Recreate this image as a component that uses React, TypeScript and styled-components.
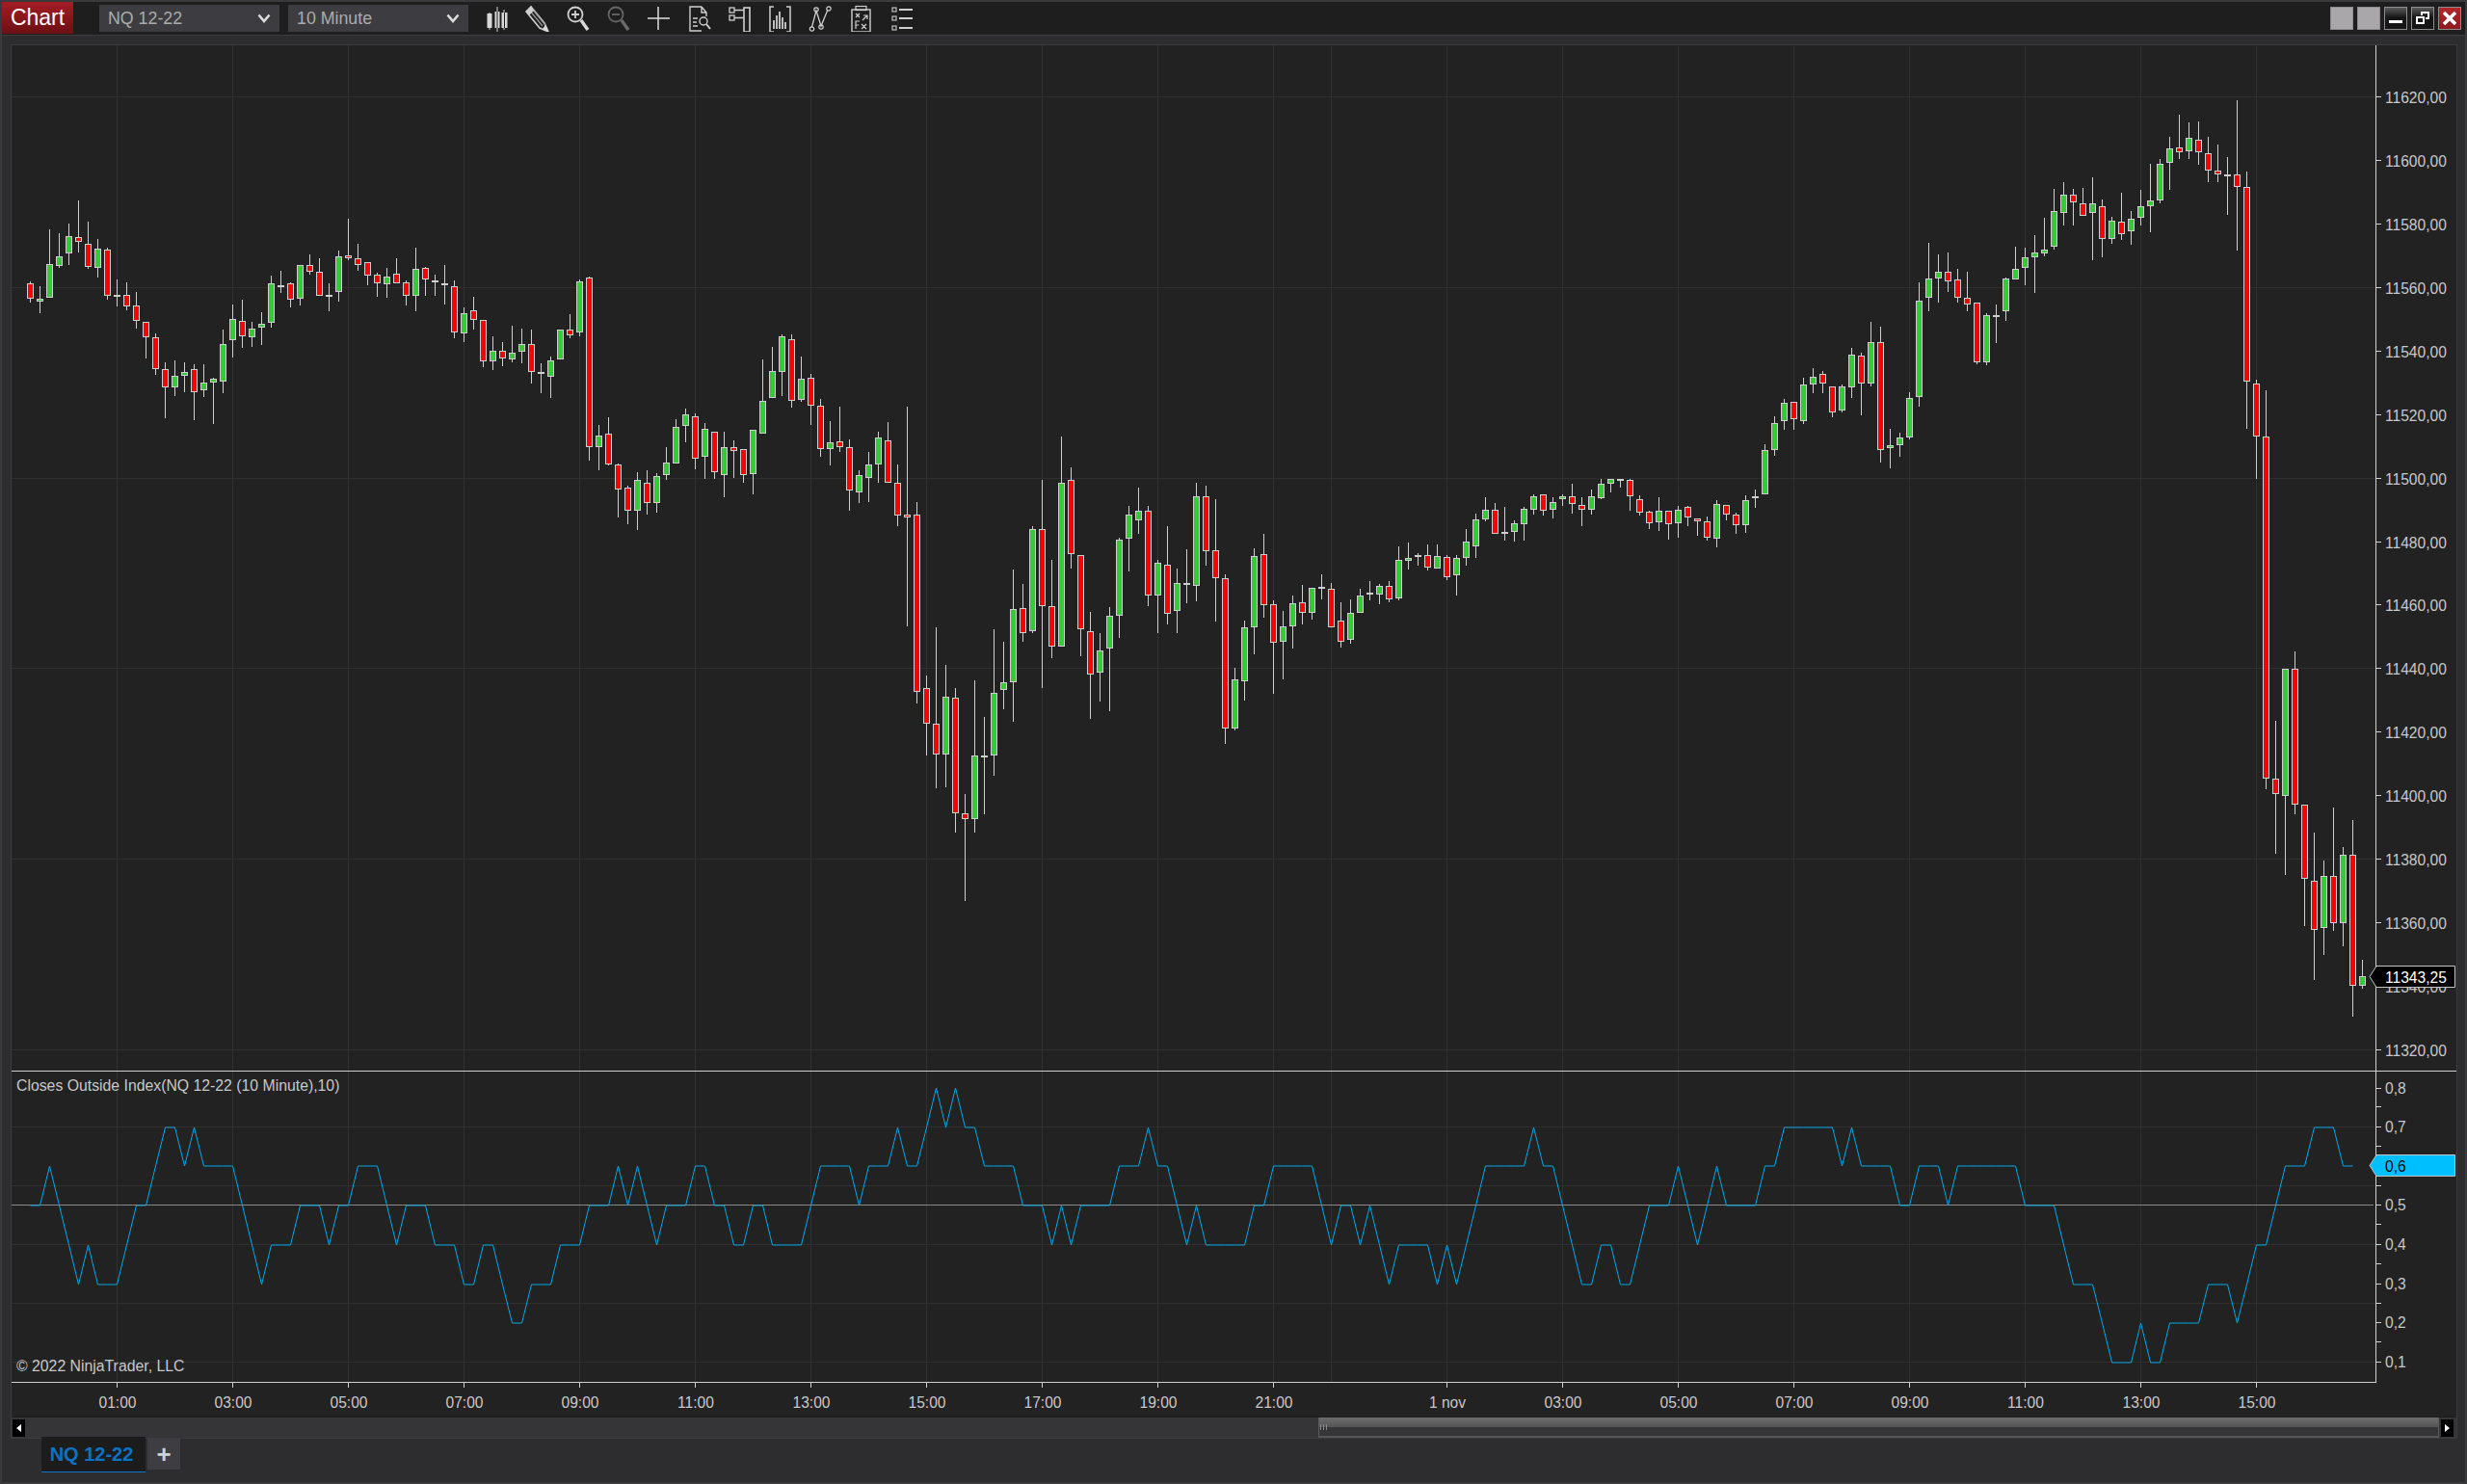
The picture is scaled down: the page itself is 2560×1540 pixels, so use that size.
import React from 'react';
import styled, { createGlobalStyle } from 'styled-components';

type Row = [number, number, number, number, number];
const FONT = `"Liberation Sans", Arial, sans-serif`;

const segA: Row[] = [
[337,343,391,401,0],[352,391,398,434,1],[175,283,386,386,1],[186,259,287,293,1],[156,196,248,285,1],[84,199,214,245,0],[150,220,292,296,0],[205,235,293,323,1],[232,238,382,392,0],[331,379,385,413,1],
[340,379,415,425,0],[370,412,460,482,0],[463,463,511,575,0],[499,511,610,627,0],[589,610,667,761,0],[583,631,667,692,1],[589,619,631,680,1],[595,610,682,767,0],[595,652,676,695,1],[637,640,652,779,1],
[487,532,649,684,1],[408,454,520,572,1],[394,460,508,542,0],[463,484,511,539,1],[433,469,481,533,1],[319,343,466,480,1],[304,349,352,372,1],[340,343,394,416,0],[286,286,391,410,1],[253,286,307,315,0],
[265,307,382,382,0],[343,379,385,428,1],[241,259,370,398,1],[142,256,265,269,0],[220,265,286,302,0],[277,277,319,347,0],[310,316,343,383,0],[295,322,346,386,1],[265,313,343,343,0],[334,340,382,410,0],
[232,298,382,428,1],[292,295,331,380,0],[316,334,338,380,1],[286,343,349,407,0],[334,352,496,512,0],[418,436,499,524,1],[385,427,457,485,0],[457,457,586,602,0],[508,553,586,611,1],[526,553,577,599,0],
[475,559,580,587,1],[484,532,556,590,1],[487,532,619,653,0],[592,619,625,683,0],[571,583,634,698,1],[487,487,580,580,1],[439,487,505,512,0],[331,337,496,506,1],[322,325,853,893,0],
];
const segB: Row[] = [
[382,409,436,494,1],[363,405,479,482,0],[478,481,541,611,0],[531,538,595,627,0],[498,519,595,641,1],[494,526,574,603,0],[502,509,576,599,1],[437,476,505,518,1],[368,388,477,477,1],[342,357,384,425,1],
[354,360,465,492,0],[378,393,460,516,1],[398,400,500,516,0],[400,436,505,561,1],[421,436,446,513,0],[441,441,507,525,0],[395,395,503,554,1],[220,322,403,403,1],[190,250,317,317,1],[160,165,253,311,1],
[160,170,324,340,0],[214,269,320,325,1],[257,267,336,382,0],[319,334,441,461,0],[372,426,443,482,1],[338,422,438,449,0],[417,436,543,594,0],[494,505,548,575,1],[449,481,512,573,1],[400,414,479,525,1],
[376,420,526,526,0],[480,526,605,632,0],[338,603,610,880,0],[573,604,1040,1069,0],[1000,1032,1118,1197,0],[882,1118,1196,1278,0],[975,1053,1196,1276,1],[1030,1056,1339,1387,0],[1293,1341,1353,1556,0],[1011,1198,1353,1387,1],
[1103,1197,1201,1342,1],[885,1042,1198,1247,1],[918,1018,1037,1083,1],[740,837,1018,1114,1],[775,833,895,917,0],[631,640,892,896,1],[517,640,830,1030,0],[716,830,928,957,0],[412,524,928,928,1],[488,519,702,736,0],
[704,704,887,952,0],[844,892,997,1107,0],[896,939,994,1064,1],[832,852,933,1088,1],[661,666,852,908,1],[583,604,662,744,1],[538,593,617,651,1],[581,593,804,829,0],[714,723,802,896,1],[632,728,847,874,0],
[737,771,842,896,1],[688,773,778,822,0],
];
const segC: Row[] = [
[543,586,865,912,1],[552,586,755,801,0],[595,754,841,975,0],[829,841,1309,1356,0],[1120,1156,1307,1313,1],[973,994,1160,1220,1],[748,772,994,1077,1],[703,766,925,963,0],[910,922,1040,1200,0],[943,991,1037,1155,1],
[895,919,991,1059,1],[862,916,949,985,0],[871,871,949,969,1],[828,867,870,906,1],[856,874,994,994,0],[916,973,1039,1056,0],[907,949,1033,1044,1],[874,895,949,949,1],[850,886,892,909,0],[859,865,892,921,1],
[850,865,907,915,0],[742,784,902,909,1],[730,778,785,813,1],[763,769,773,801,1],[736,769,808,816,0],[736,772,811,811,1],[769,775,838,847,0],[769,778,832,894,1],[688,727,778,801,1],[640,658,742,777,1],
[589,628,658,663,1],[607,628,703,703,0],[619,697,703,722,1],[661,670,697,726,1],[619,625,673,723,1],[580,584,628,642,1],[580,580,631,645,0],[589,604,628,654,1],[580,586,595,615,1],[546,586,610,639,0],
[589,613,628,678,0],[565,586,628,642,1],[532,547,590,595,1],[532,532,547,573,1],[532,532,538,558,0],[532,535,586,630,0],[583,595,637,645,0],[631,634,670,687,0],[589,631,667,693,1],[631,631,673,720,0],
[616,628,670,714,1],[616,619,652,678,0],[655,655,664,708,0],[649,664,715,723,0],[598,610,718,744,1],[613,613,643,660,0],[637,643,676,702,0],[583,598,676,699,1],[565,586,592,621,1],[424,442,580,580,1],
[337,358,442,459,1],[283,295,352,378,1],[292,292,346,378,0],[217,238,352,360,1],
];
const segD: Row[] = [
[460,475,488,503,1],[466,471,487,503,0],[491,491,535,544,0],[488,491,533,535,1],[426,437,494,511,1],[435,440,486,541,0],[382,416,486,492,1],[391,417,600,621,0],[563,591,596,630,1],[570,578,592,611,1],
[501,511,578,581,1],[315,346,509,526,1],[248,309,342,364,1],[268,297,309,350,1],[265,298,314,332,0],[292,311,341,350,0],[297,342,352,364,0],[349,349,450,454,0],[367,371,450,456,1],[353,371,374,418,1],
[307,309,364,381,1],[255,292,311,311,1],[257,272,290,320,1],[236,265,272,333,1],[205,259,267,271,1],[157,195,254,260,1],[146,166,197,219,1],[157,167,179,219,0],[155,181,202,202,0],[138,182,198,278,1],
[174,187,241,273,0],[204,211,241,250,1],[164,213,233,243,0],[195,208,228,252,1],[158,187,205,219,1],[114,177,187,230,1],[106,114,176,182,1],[69,88,112,158,1],[31,87,94,106,0],[44,71,93,106,1],
[42,74,94,116,0],[69,96,125,145,0],[81,125,132,145,0],[103,133,136,201,0],[7,133,154,261,0],[127,153,484,563,0],[481,486,577,648,0],[498,577,1157,1174,0],[1058,1157,1183,1284,0],[971,971,1186,1320,1],
[941,971,1200,1217,0],[1201,1201,1327,1406,0],[1248,1329,1413,1498,0],[1296,1322,1410,1455,1],[1206,1322,1402,1414,0],[1272,1285,1402,1441,1],[1226,1286,1508,1560,0],[1463,1492,1508,1512,1],
];

const scaled = (rows: Row[], base: number, k: number) =>
  rows.map(([a, b, c, d, g]) => ({
    top: Math.round(base + a / k),
    open: Math.round(base + b / k),
    close: Math.round(base + c / k),
    bottom: Math.round(base + d / k),
    up: g === 1,
  }));

const candles = [
  ...scaled(segA, 180, 3),
  ...scaled(segB, 280, 1568 / 660),
  ...scaled(segC, 320, 3),
  ...scaled(segD, 100, 1568 / 960),
];

const indicator = (
  '5565434333' + '4556776766' + '6654344455' + '5455666545' + '5544433443' + '2233344455' +
  '5656545556' + '6554455444' + '4566665666' + '7667878776' + '6665554545' + '5556667665' +
  '4' + '544444556' + '6666545545' + '4344443434' + '5666667665' + '4334433455' +
  '5654565555' + '6677777767' + '6666556665' + '6666666555' + '5433321112' + '1122223332' + '344566677766'
)
  .split('')
  .map(Number);

const VALUE_Y: Record<number, number> = { 8: 1129, 7: 1170, 6: 1210, 5: 1251, 4: 1292, 3: 1333, 2: 1373, 1: 1414 };
const indicatorPoints = indicator.map((v, i) => `${31.5 + i * 10},${VALUE_Y[v]}`).join(' ');

const priceY = (p: number) => 100 + ((11620 - p) * 989) / 300;
const PRICE_LABELS = Array.from({ length: 16 }, (_, i) => 11620 - i * 20);
const PRICE_GRID = [11620, 11560, 11500, 11440, 11380, 11320];
const V_GRID = [121, 241, 361, 481, 601, 721, 841, 961, 1081, 1201, 1321, 1381, 1501, 1621, 1741, 1861, 1981, 2101, 2221, 2341];
const TIME_LABELS: [number, string][] = [
  [121, '01:00'], [241, '03:00'], [361, '05:00'], [481, '07:00'], [601, '09:00'], [721, '11:00'], [841, '13:00'],
  [961, '15:00'], [1081, '17:00'], [1201, '19:00'], [1321, '21:00'], [1501, '1 nov'], [1621, '03:00'], [1741, '05:00'],
  [1861, '07:00'], [1981, '09:00'], [2101, '11:00'], [2221, '13:00'], [2341, '15:00'],
];
const IND_LABELS: [number, string][] = [
  [1129, '0,8'], [1169, '0,7'], [1210, '0,6'], [1250, '0,5'], [1291, '0,4'], [1332, '0,3'], [1372, '0,2'], [1413, '0,1'],
];
const IND_MINOR = [1148, 1189, 1230, 1270, 1311, 1352, 1392];
const IND_GRID = [1169, 1230, 1291, 1352, 1413];

const GlobalStyle = createGlobalStyle`
  html, body { margin: 0; padding: 0; background: #2d2d2f; }
  #root { width: 2560px; height: 1540px; overflow: hidden; }
`;

const Window = styled.div`
  box-sizing: border-box;
  width: 2560px;
  height: 1540px;
  display: flex;
  flex-direction: column;
  background: #2d2d2f;
  border: 2px solid #3a3a3c;
  font-family: ${FONT};
`;

const TitleBar = styled.header`
  box-sizing: border-box;
  height: 35px;
  flex: none;
  display: flex;
  align-items: flex-start;
  background: #1e1e1e;
  border-bottom: 1px solid #3c3c3e;
`;

const ChartButton = styled.div`
  width: 74px;
  height: 33px;
  display: flex;
  align-items: center;
  justify-content: center;
  color: #fff;
  font-size: 23px;
  background: linear-gradient(180deg, #a31d24 0%, #6c1014 100%);
`;

const Select = styled.div<{ $first?: boolean }>`
  box-sizing: border-box;
  width: 187px;
  height: 28px;
  margin: 3px 0 0 ${(p) => (p.$first ? 27 : 9)}px;
  padding: 0 9px;
  display: flex;
  align-items: center;
  justify-content: space-between;
  background: #3d3d41;
  color: #ababab;
  font-size: 17.8px;
`;

const ToolGroup = styled.div`
  display: flex;
  margin-left: 9px;
`;

const ToolIcon = styled.svg`
  display: block;
  width: 42px;
  height: 28px;
  margin-top: 3px;
  fill: none;
  stroke: #cfcfcf;
`;

const WindowButtons = styled.div`
  display: flex;
  gap: 4px;
  margin: 5px 4px 0 auto;
`;

const WinButton = styled.div<{ $kind: 'plain' | 'dark' | 'close' }>`
  box-sizing: border-box;
  width: 24px;
  height: 24px;
  display: flex;
  align-items: center;
  justify-content: center;
  border: 1px solid #8c8c8e;
  background: ${(p) =>
    p.$kind === 'plain'
      ? '#a9a7a9'
      : p.$kind === 'dark'
      ? 'linear-gradient(180deg, #5a5a5c 0%, #161616 45%, #161616 100%)'
      : 'linear-gradient(180deg, #b3262b 0%, #8f1a1e 100%)'};
`;

const Body = styled.main`
  flex: 1;
  min-height: 0;
  display: flex;
  flex-direction: column;
  padding: 9px 9px 0 9px;
`;

const ChartFrame = styled.section`
  box-sizing: border-box;
  width: 2539px;
  height: 1447px;
  flex: none;
  display: flex;
  flex-direction: column;
  border: 1px solid #3c3c3e;
  background: #222222;
`;

const PricePane = styled.div`
  flex: none;
  height: 1064px;
  border-bottom: 1px solid #d0d0d0;
`;

const IndicatorPane = styled.div`
  position: relative;
  flex: none;
  height: 323px;
`;

const PaneText = styled.span<{ $top: number }>`
  position: absolute;
  left: 5px;
  top: ${(p) => p.$top}px;
  color: #c8c8c8;
  font-size: 15.8px;
  line-height: 18px;
  white-space: nowrap;
`;

const Plot = styled.svg`
  display: block;
`;

const Crisp = styled.g`
  shape-rendering: crispEdges;
`;

const GridLine = styled.rect`
  fill: #303030;
`;

const AxisMark = styled.rect`
  fill: #d0d0d0;
`;

const Wick = styled.rect`
  fill: #cfcfcf;
`;

const CandleBody = styled.rect<{ $up: boolean }>`
  fill: ${(p) => (p.$up ? '#32cd32' : '#ff0000')};
  stroke: #cfcfcf;
  stroke-width: 1;
`;

const AxisText = styled.text<{ $color?: string; $anchor?: string }>`
  font-family: ${FONT};
  font-size: 15.6px;
  fill: ${(p) => p.$color ?? '#c8c8c8'};
  text-anchor: ${(p) => p.$anchor ?? 'start'};
`;

const Flag = styled.polygon<{ $fill: string }>`
  fill: ${(p) => p.$fill};
  stroke: #c4c4c4;
  stroke-width: 1;
`;

const IndicatorLine = styled.polyline`
  fill: none;
  stroke: #00a8e8;
  stroke-width: 1;
`;

const ZeroLine = styled.rect`
  fill: #8a8a8a;
`;

const TimeAxis = styled.div`
  flex: none;
  height: 35px;
`;

const ScrollBar = styled.div`
  flex: none;
  height: 22px;
  display: flex;
  align-items: center;
  gap: 2px;
  padding: 0 3px 0 1px;
  background: #353537;
  border-top: 1px solid #1e1e1e;
  box-sizing: border-box;
`;

const ScrollArrow = styled.div<{ $right?: boolean }>`
  flex: none;
  width: 13px;
  height: 18px;
  display: flex;
  align-items: center;
  justify-content: center;
  background: #000;
  &::before {
    content: '';
    width: 0;
    height: 0;
    border-top: 4px solid transparent;
    border-bottom: 4px solid transparent;
    ${(p) => (p.$right ? 'border-left: 5px solid #fff;' : 'border-right: 5px solid #fff;')}
  }
`;

const ScrollTrack = styled.div`
  flex: 1;
  height: 100%;
  display: flex;
  justify-content: flex-end;
`;

const ScrollThumb = styled.div`
  position: relative;
  box-sizing: border-box;
  width: 1163px;
  height: 100%;
  background: linear-gradient(180deg, #6c6c6c 0%, #555 52%, #353537 54%, #353537 100%);
  border-bottom: 2px solid #555;
  border-right: 1px solid #5c5c5c;
  border-left: 1px solid #5c5c5c;
  &::before {
    content: '';
    position: absolute;
    left: 1px;
    top: 7px;
    width: 7px;
    height: 6px;
    background: repeating-linear-gradient(90deg, #8a8a8a 0 1px, transparent 1px 3px);
  }
`;

const TabBar = styled.nav`
  position: relative;
  flex: none;
  display: flex;
  align-items: flex-start;
  gap: 2px;
  margin-top: -2px;
  padding-left: 32px;
`;

const Tab = styled.div`
  box-sizing: border-box;
  width: 108px;
  height: 37px;
  padding-right: 4px;
  display: flex;
  align-items: center;
  justify-content: center;
  background: #1c1c1c;
  border-bottom: 1px solid #0a78d0;
  color: #0a74c4;
  font-size: 20px;
  font-weight: 700;
`;

const AddTab = styled.div`
  width: 34px;
  height: 32px;
  margin-top: 2px;
  display: flex;
  align-items: center;
  justify-content: center;
  background: #3e3e42;
  color: #d0d0d0;
  font-size: 26px;
  font-weight: 700;
  line-height: 32px;
`;

const Chevron = () => (
  <svg width="14" height="10" viewBox="0 0 14 10">
    <path d="M1.5 1.5 L7 8 L12.5 1.5" fill="none" stroke="#dcdcdc" strokeWidth="2.6" />
  </svg>
);

const Tool = ({ children }: { children: React.ReactNode }) => (
  <ToolIcon viewBox="-8 0 42 28">{children}</ToolIcon>
);

const Tools = () => (
  <ToolGroup>
    <Tool>
      <path d="M5 8V26M13 2V28M20 5V26" strokeWidth="1" />
      <rect x="2.5" y="9" width="5" height="15" fill="#d8d8d8" stroke="none" />
      <rect x="10.5" y="7" width="5" height="17" fill="#d8d8d8" stroke="none" />
      <rect x="17.5" y="8" width="6" height="16" fill="#d8d8d8" stroke="none" />
      <path d="M13 7V24M20.5 8V24" stroke="#1e1e1e" strokeWidth="1" />
    </Tool>
    <Tool>
      <path d="M1 7 L6 2 L20 19 L24 28 L15 24 Z" strokeWidth="1.6" />
      <path d="M4 5 L18 22 M7 4 L21 21" strokeWidth="1.2" stroke="#9a9a9a" />
      <path d="M1 7 L6 2 L9 6 L4 11 Z" fill="#cfcfcf" stroke="none" />
      <path d="M18 25 L24 28 L21 21 Z" fill="#dcdcdc" stroke="none" />
    </Tool>
    <Tool>
      <circle cx="10" cy="10" r="7.5" strokeWidth="1.8" />
      <path d="M10 6V14M6 10H14" strokeWidth="1.8" />
      <path d="M16 16 L23 26" strokeWidth="3.4" stroke="#dadada" />
    </Tool>
    <Tool>
      <circle cx="10" cy="10" r="7.5" strokeWidth="1.8" stroke="#666" />
      <path d="M6 10H14" strokeWidth="1.8" stroke="#666" />
      <path d="M16 16 L23 26" strokeWidth="3.4" stroke="#6a6a6a" />
    </Tool>
    <Tool>
      <path d="M12 2V26M1 14H24" strokeWidth="1.5" stroke="#dedede" />
    </Tool>
    <Tool>
      <path d="M15 2H3V27H15M15 2L20 8V12M15 2V8H20" strokeWidth="1.4" />
      <path d="M6 14H11M6 18H10M6 22H11" strokeWidth="1.4" />
      <circle cx="17" cy="17" r="4" strokeWidth="1.4" />
      <path d="M20 20L24 25" strokeWidth="2" />
    </Tool>
    <Tool>
      <rect x="2" y="3" width="5" height="5" strokeWidth="1.3" />
      <rect x="2" y="11" width="5" height="5" strokeWidth="1.3" />
      <path d="M7 5.5H17M7 13.5H17" strokeWidth="1.3" />
      <rect x="17" y="3" width="6" height="25" strokeWidth="1.6" />
    </Tool>
    <Tool>
      <path d="M6 2H2V28H6M19 2H23V28H19" strokeWidth="1.5" />
      <path d="M6 25V16M9 25V11M12 25V7M15 25V13M18 25V18" strokeWidth="2" stroke="#bcbcbc" />
    </Tool>
    <Tool>
      <path d="M3.5 23 L8 6 L13 22 L20 5" strokeWidth="1.3" />
      <circle cx="3.5" cy="25" r="2.2" strokeWidth="1.2" />
      <circle cx="8" cy="5" r="2.2" strokeWidth="1.2" />
      <circle cx="13" cy="23" r="2.2" strokeWidth="1.2" />
      <circle cx="21" cy="4" r="2.2" strokeWidth="1.2" />
    </Tool>
    <Tool>
      <rect x="3" y="5" width="19" height="23" strokeWidth="1.4" />
      <rect x="7" y="1.5" width="11" height="4" strokeWidth="1.2" />
      <path d="M7 9L11 13M11 9L7 13M14 16L19 11M15 11H19V15" strokeWidth="1.2" />
      <path d="M7 25V17H11M7 21H10M13 20L18 25M18 20L13 25" strokeWidth="1.2" />
    </Tool>
    <Tool>
      <rect x="3" y="3" width="4" height="4" strokeWidth="1.1" />
      <rect x="3" y="12" width="4" height="4" strokeWidth="1.1" />
      <rect x="3" y="22" width="4" height="4" strokeWidth="1.1" />
      <path d="M10 5H24M10 14H24M10 24H24" strokeWidth="2" />
    </Tool>
  </ToolGroup>
);

const PriceChart = () => (
  <Plot width="2537" height="1064" viewBox="12 47 2537 1064">
    <Crisp>
      {PRICE_GRID.map((p) => (
        <GridLine key={p} x="12" y={Math.round(priceY(p))} width="2453" height="1" />
      ))}
      {V_GRID.map((x) => (
        <GridLine key={x} x={x} y="47" width="1" height="1064" />
      ))}
      {candles.map((c, i) => {
        const x = 31 + i * 10;
        const bottom = Math.max(c.close, c.open + 2);
        return (
          <g key={i}>
            <Wick x={x} y={c.top} width="1" height={Math.max(c.bottom, bottom) - c.top} />
            <CandleBody $up={c.up} x={x - 2.5} y={c.open + 0.5} width="6" height={bottom - c.open - 1} />
          </g>
        );
      })}
      <AxisMark x="2465" y="47" width="1" height="1064" />
      {PRICE_LABELS.map((p) => (
        <AxisMark key={p} x="2466" y={Math.round(priceY(p))} width="5" height="1" />
      ))}
    </Crisp>
    {PRICE_LABELS.map((p) => (
      <AxisText key={p} x="2475" y={Math.round(priceY(p)) + 7}>{`${p},00`}</AxisText>
    ))}
    <Flag $fill="#000000" points="2459,1013.5 2466,1002.5 2547.5,1002.5 2547.5,1024.5 2466,1024.5" />
    <AxisText x="2475" y="1020" $color="#ffffff">11343,25</AxisText>
  </Plot>
);

const IndicatorChart = () => (
  <Plot width="2537" height="323" viewBox="12 1112 2537 323">
    <Crisp>
      {IND_GRID.map((y) => (
        <GridLine key={y} x="12" y={y} width="2453" height="1" />
      ))}
      {V_GRID.map((x) => (
        <GridLine key={x} x={x} y="1112" width="1" height="322" />
      ))}
      <ZeroLine x="12" y="1250" width="2451" height="1" />
      <AxisMark x="2465" y="1112" width="1" height="322" />
      <AxisMark x="12" y="1434" width="2454" height="1" />
      {[...IND_LABELS.map(([y]) => y), ...IND_MINOR].map((y) => (
        <AxisMark key={y} x="2466" y={y} width="5" height="1" />
      ))}
    </Crisp>
    <IndicatorLine points={indicatorPoints} />
    {IND_LABELS.map(([y, t]) => (
      <AxisText key={t} x="2475" y={y + 6}>{t}</AxisText>
    ))}
    <Flag $fill="#00bfff" points="2459,1209.5 2466,1198.5 2547.5,1198.5 2547.5,1220.5 2466,1220.5" />
    <AxisText x="2475" y="1216" $color="#000000">0,6</AxisText>
  </Plot>
);

const TimeChart = () => (
  <Plot width="2537" height="35" viewBox="12 1435 2537 35">
    <Crisp>
      {TIME_LABELS.map(([x]) => (
        <AxisMark key={x} x={x} y="1435" width="1" height="5" />
      ))}
    </Crisp>
    {TIME_LABELS.map(([x, t]) => (
      <AxisText key={x} x={x + 1} y="1461" $anchor="middle">{t}</AxisText>
    ))}
  </Plot>
);

export default function App() {
  return (
    <>
      <GlobalStyle />
      <Window>
        <TitleBar>
          <ChartButton>Chart</ChartButton>
          <Select $first>
            <span>NQ 12-22</span>
            <Chevron />
          </Select>
          <Select>
            <span>10 Minute</span>
            <Chevron />
          </Select>
          <Tools />
          <WindowButtons>
            <WinButton $kind="plain" />
            <WinButton $kind="plain" />
            <WinButton $kind="dark">
              <svg width="16" height="16" viewBox="0 0 16 16">
                <rect x="1" y="10" width="14" height="3" fill="#fff" />
              </svg>
            </WinButton>
            <WinButton $kind="dark">
              <svg width="18" height="18" viewBox="0 0 18 18">
                <path d="M7 2H16V10H12V6H7Z M9 4V6H12V8H14V4Z" fill="#fff" fillRule="evenodd" />
                <path d="M2 7H11V15H2Z M4 9V13H9V9Z" fill="#fff" fillRule="evenodd" />
              </svg>
            </WinButton>
            <WinButton $kind="close">
              <svg width="18" height="18" viewBox="0 0 18 18">
                <path d="M3 3 L15 15 M15 3 L3 15" stroke="#fff" strokeWidth="3.6" />
              </svg>
            </WinButton>
          </WindowButtons>
        </TitleBar>
        <Body>
          <ChartFrame>
            <PricePane>
              <PriceChart />
            </PricePane>
            <IndicatorPane>
              <IndicatorChart />
              <PaneText $top={6}>Closes Outside Index(NQ 12-22 (10 Minute),10)</PaneText>
              <PaneText $top={297}>© 2022 NinjaTrader, LLC</PaneText>
            </IndicatorPane>
            <TimeAxis>
              <TimeChart />
            </TimeAxis>
            <ScrollBar>
              <ScrollArrow />
              <ScrollTrack>
                <ScrollThumb />
              </ScrollTrack>
              <ScrollArrow $right />
            </ScrollBar>
          </ChartFrame>
          <TabBar>
            <Tab>NQ 12-22</Tab>
            <AddTab>+</AddTab>
          </TabBar>
        </Body>
      </Window>
    </>
  );
}
